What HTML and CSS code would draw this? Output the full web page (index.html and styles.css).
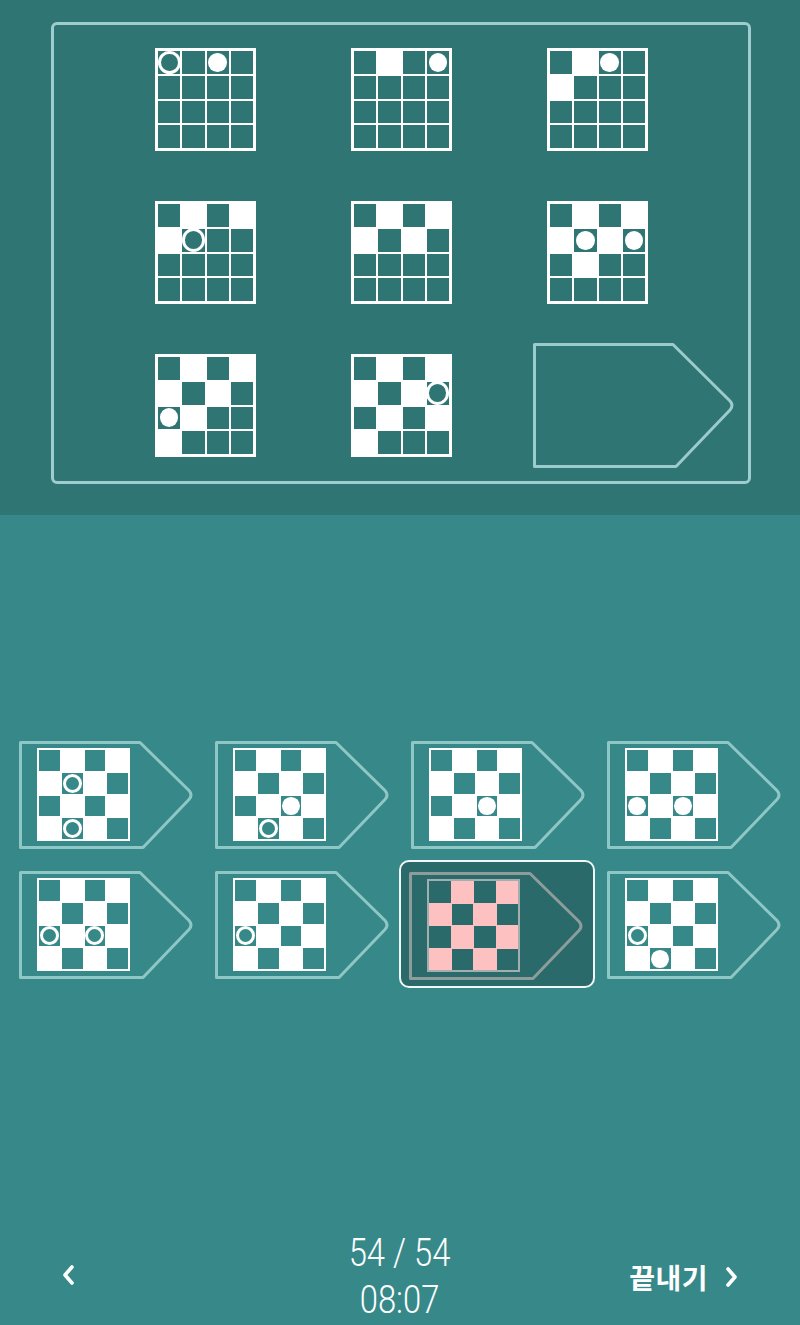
FILE: index.html
```html
<!DOCTYPE html>
<html lang="ko">
<head>
<meta charset="utf-8">
<title>Puzzle</title>
<link rel="stylesheet" href="styles.css">
</head>
<body>
<div class="top">
  <div class="panel">
    <div class="board">
      <div class="grid g-top">
        <i class="d r"></i><i class="d"></i><i class="d c"></i><i class="d"></i>
        <i class="d"></i><i class="d"></i><i class="d"></i><i class="d"></i>
        <i class="d"></i><i class="d"></i><i class="d"></i><i class="d"></i>
        <i class="d"></i><i class="d"></i><i class="d"></i><i class="d"></i>
      </div>
      <div class="grid g-top">
        <i class="d"></i><i class="w"></i><i class="d"></i><i class="d c"></i>
        <i class="d"></i><i class="d"></i><i class="d"></i><i class="d"></i>
        <i class="d"></i><i class="d"></i><i class="d"></i><i class="d"></i>
        <i class="d"></i><i class="d"></i><i class="d"></i><i class="d"></i>
      </div>
      <div class="grid g-top">
        <i class="d"></i><i class="w"></i><i class="d c"></i><i class="d"></i>
        <i class="w"></i><i class="d"></i><i class="d"></i><i class="d"></i>
        <i class="d"></i><i class="d"></i><i class="d"></i><i class="d"></i>
        <i class="d"></i><i class="d"></i><i class="d"></i><i class="d"></i>
      </div>
      <div class="grid g-top">
        <i class="d"></i><i class="w"></i><i class="d"></i><i class="w"></i>
        <i class="w"></i><i class="d r"></i><i class="d"></i><i class="d"></i>
        <i class="d"></i><i class="d"></i><i class="d"></i><i class="d"></i>
        <i class="d"></i><i class="d"></i><i class="d"></i><i class="d"></i>
      </div>
      <div class="grid g-top">
        <i class="d"></i><i class="w"></i><i class="d"></i><i class="w"></i>
        <i class="w"></i><i class="d"></i><i class="w"></i><i class="d"></i>
        <i class="d"></i><i class="d"></i><i class="d"></i><i class="d"></i>
        <i class="d"></i><i class="d"></i><i class="d"></i><i class="d"></i>
      </div>
      <div class="grid g-top">
        <i class="d"></i><i class="w"></i><i class="d"></i><i class="w"></i>
        <i class="w"></i><i class="d c"></i><i class="w"></i><i class="d c"></i>
        <i class="d"></i><i class="w"></i><i class="d"></i><i class="d"></i>
        <i class="d"></i><i class="d"></i><i class="d"></i><i class="d"></i>
      </div>
      <div class="grid g-top">
        <i class="d"></i><i class="w"></i><i class="d"></i><i class="w"></i>
        <i class="w"></i><i class="d"></i><i class="w"></i><i class="d"></i>
        <i class="d c"></i><i class="w"></i><i class="d"></i><i class="d"></i>
        <i class="w"></i><i class="d"></i><i class="d"></i><i class="d"></i>
      </div>
      <div class="grid g-top">
        <i class="d"></i><i class="w"></i><i class="d"></i><i class="w"></i>
        <i class="w"></i><i class="d"></i><i class="w"></i><i class="d r"></i>
        <i class="d"></i><i class="w"></i><i class="d"></i><i class="w"></i>
        <i class="w"></i><i class="d"></i><i class="d"></i><i class="d"></i>
      </div>
      <div class="blank">
        <svg class="shape" viewBox="0 0 204 125" width="204" height="125">
          <path d="M1.5 1.5 H140 L197 58 Q201 62.5 197 67 L143 123.5 H1.5 Z" fill="none" stroke="#9ccbcb" stroke-width="3" stroke-linejoin="round"/>
        </svg>
      </div>
    </div>
  </div>
</div>

<div class="bottom">
  <div class="options">
    <div class="opt">
      <svg class="oshape" viewBox="0 0 176 108" width="176" height="108"><path d="M1.5 1.5 H121 L170 49.5 Q174 54 170 58.5 L124 106.5 H1.5 Z" fill="none" stroke="#8fc6c6" stroke-width="3" stroke-linejoin="round"/></svg>
      <div class="grid g-opt">
        <i class="d"></i><i class="w"></i><i class="d"></i><i class="w"></i>
        <i class="w"></i><i class="d r"></i><i class="w"></i><i class="d"></i>
        <i class="d"></i><i class="w"></i><i class="d"></i><i class="w"></i>
        <i class="w"></i><i class="d r"></i><i class="w"></i><i class="d"></i>
      </div>
    </div>
    <div class="opt">
      <svg class="oshape" viewBox="0 0 176 108" width="176" height="108"><path d="M1.5 1.5 H121 L170 49.5 Q174 54 170 58.5 L124 106.5 H1.5 Z" fill="none" stroke="#8fc6c6" stroke-width="3" stroke-linejoin="round"/></svg>
      <div class="grid g-opt">
        <i class="d"></i><i class="w"></i><i class="d"></i><i class="w"></i>
        <i class="w"></i><i class="d"></i><i class="w"></i><i class="d"></i>
        <i class="d"></i><i class="w"></i><i class="d c"></i><i class="w"></i>
        <i class="w"></i><i class="d r"></i><i class="w"></i><i class="d"></i>
      </div>
    </div>
    <div class="opt">
      <svg class="oshape" viewBox="0 0 176 108" width="176" height="108"><path d="M1.5 1.5 H121 L170 49.5 Q174 54 170 58.5 L124 106.5 H1.5 Z" fill="none" stroke="#8fc6c6" stroke-width="3" stroke-linejoin="round"/></svg>
      <div class="grid g-opt">
        <i class="d"></i><i class="w"></i><i class="d"></i><i class="w"></i>
        <i class="w"></i><i class="d"></i><i class="w"></i><i class="d"></i>
        <i class="d"></i><i class="w"></i><i class="d c"></i><i class="w"></i>
        <i class="w"></i><i class="d"></i><i class="w"></i><i class="d"></i>
      </div>
    </div>
    <div class="opt">
      <svg class="oshape" viewBox="0 0 176 108" width="176" height="108"><path d="M1.5 1.5 H121 L170 49.5 Q174 54 170 58.5 L124 106.5 H1.5 Z" fill="none" stroke="#8fc6c6" stroke-width="3" stroke-linejoin="round"/></svg>
      <div class="grid g-opt">
        <i class="d"></i><i class="w"></i><i class="d"></i><i class="w"></i>
        <i class="w"></i><i class="d"></i><i class="w"></i><i class="d"></i>
        <i class="d c"></i><i class="w"></i><i class="d c"></i><i class="w"></i>
        <i class="w"></i><i class="d"></i><i class="w"></i><i class="d"></i>
      </div>
    </div>
    <div class="opt">
      <svg class="oshape" viewBox="0 0 176 108" width="176" height="108"><path d="M1.5 1.5 H121 L170 49.5 Q174 54 170 58.5 L124 106.5 H1.5 Z" fill="none" stroke="#8fc6c6" stroke-width="3" stroke-linejoin="round"/></svg>
      <div class="grid g-opt">
        <i class="d"></i><i class="w"></i><i class="d"></i><i class="w"></i>
        <i class="w"></i><i class="d"></i><i class="w"></i><i class="d"></i>
        <i class="d r"></i><i class="w"></i><i class="d r"></i><i class="w"></i>
        <i class="w"></i><i class="d"></i><i class="w"></i><i class="d"></i>
      </div>
    </div>
    <div class="opt">
      <svg class="oshape" viewBox="0 0 176 108" width="176" height="108"><path d="M1.5 1.5 H121 L170 49.5 Q174 54 170 58.5 L124 106.5 H1.5 Z" fill="none" stroke="#8fc6c6" stroke-width="3" stroke-linejoin="round"/></svg>
      <div class="grid g-opt">
        <i class="d"></i><i class="w"></i><i class="d"></i><i class="w"></i>
        <i class="w"></i><i class="d"></i><i class="w"></i><i class="d"></i>
        <i class="d r"></i><i class="w"></i><i class="d"></i><i class="w"></i>
        <i class="w"></i><i class="d"></i><i class="w"></i><i class="d"></i>
      </div>
    </div>
    <div class="opt selected">
      <svg class="oshape" viewBox="0 0 176 108" width="176" height="108"><path d="M1.5 1.5 H121 L170 49.5 Q174 54 170 58.5 L124 106.5 H1.5 Z" fill="none" stroke="#8e9c9c" stroke-width="3" stroke-linejoin="round"/></svg>
      <div class="grid g-opt pink">
        <i class="d"></i><i class="w"></i><i class="d"></i><i class="w"></i>
        <i class="w"></i><i class="d"></i><i class="w"></i><i class="d"></i>
        <i class="d"></i><i class="w"></i><i class="d"></i><i class="w"></i>
        <i class="w"></i><i class="d"></i><i class="w"></i><i class="d"></i>
      </div>
    </div>
    <div class="opt">
      <svg class="oshape" viewBox="0 0 176 108" width="176" height="108"><path d="M1.5 1.5 H121 L170 49.5 Q174 54 170 58.5 L124 106.5 H1.5 Z" fill="none" stroke="#8fc6c6" stroke-width="3" stroke-linejoin="round"/></svg>
      <div class="grid g-opt">
        <i class="d"></i><i class="w"></i><i class="d"></i><i class="w"></i>
        <i class="w"></i><i class="d"></i><i class="w"></i><i class="d"></i>
        <i class="d r"></i><i class="w"></i><i class="d"></i><i class="w"></i>
        <i class="w"></i><i class="d c"></i><i class="w"></i><i class="d"></i>
      </div>
    </div>
  </div>

  <div class="nav">
    <div class="prev">
      <svg width="16" height="24" viewBox="0 0 16 24"><polyline points="12,4 5,12 12,20" fill="none" stroke="#fff" stroke-width="3.6" stroke-linecap="round" stroke-linejoin="round"/></svg>
    </div>
    <div class="status">
      <div class="count">54 / 54</div>
      <div class="time">08:07</div>
    </div>
    <div class="finish">
      <span class="finish-label">끝내기</span>
      <svg width="16" height="24" viewBox="0 0 16 24"><polyline points="4,4 11,12 4,20" fill="none" stroke="#fff" stroke-width="3.6" stroke-linecap="round" stroke-linejoin="round"/></svg>
    </div>
  </div>
</div>
</body>
</html>
```

FILE: styles.css
```css
html, body {
  margin: 0;
  padding: 0;
}
body {
  width: 800px;
  height: 1325px;
  background: #378989;
  font-family: Roboto, "Noto Sans CJK KR", sans-serif;
  color: #fff;
  display: flex;
  flex-direction: column;
  overflow: hidden;
}
.top {
  height: 515px;
  background: #2e7574;
  padding-top: 22px;
  box-sizing: border-box;
  flex: none;
}
.panel {
  margin-left: 51px;
  width: 700px;
  height: 462px;
  box-sizing: border-box;
  border: 3px solid #9fcccc;
  border-radius: 6px;
  padding: 23px 0 0 101px;
}
.board {
  display: grid;
  grid-template-columns: repeat(3, 101px);
  grid-template-rows: 103px 103px 103px;
  column-gap: 95px;
  row-gap: 50px;
}
.grid {
  display: grid;
  grid-template-columns: repeat(4, 1fr);
  grid-template-rows: repeat(4, 1fr);
  background: #fff;
  box-sizing: border-box;
}
.grid i {
  display: flex;
  align-items: center;
  justify-content: center;
}
.g-top {
  width: 101px;
  height: 103px;
  padding: 3px;
  gap: 2px;
}
.g-top .d { background: #2e7574; }
.g-top .w { background: #fff; }
.grid .c::after {
  content: "";
  display: block;
  width: 84%;
  height: 84%;
  border-radius: 50%;
  background: #fff;
}
.grid .r::after {
  content: "";
  display: block;
  width: 100%;
  height: 100%;
  box-sizing: border-box;
  border-radius: 50%;
  border: 3px solid #fff;
}
.g-top .r::after {
  width: 104%;
  height: 104%;
  flex: none;
}
.blank {
  align-self: center;
  margin-left: -14px;
  width: 204px;
  height: 125px;
}
.shape, .oshape {
  display: block;
}
.bottom {
  flex: 1;
  display: flex;
  flex-direction: column;
}
.options {
  margin: 215px 0 0 8px;
  display: grid;
  grid-template-columns: repeat(4, 196px);
  grid-auto-rows: 128px;
  row-gap: 2px;
}
.opt {
  position: relative;
  box-sizing: border-box;
  padding: 18px 0 0 29px;
}
.oshape {
  position: absolute;
  left: 11px;
  top: 11px;
}
.g-opt {
  position: relative;
  width: 93px;
  height: 93px;
  padding: 2px;
  gap: 2px;
}
.g-opt .d { background: #378989; }
.g-opt .w { background: #fff; }
.g-opt .c::after {
  width: 86%;
  height: 86%;
}
.g-opt .r::after {
  width: 92%;
  height: 92%;
}
.selected {
  background: #2a6a6a;
  border: 2px solid #f2f7f7;
  border-radius: 10px;
  margin-left: -1px;
  margin-right: 1px;
  padding: 17px 0 0 26px;
}
.selected .oshape {
  left: 8px;
  top: 10px;
}
.g-opt.pink {
  background: #fdc1c1;
  border: 2px solid #a3aeae;
  padding: 0;
  gap: 1px;
}
.g-opt.pink .d { background: #2a6a6a; }
.g-opt.pink .w { background: #fdc1c1; }

.nav {
  margin-top: auto;
  height: 100px;
  margin-bottom: 0;
  display: flex;
  align-items: center;
  justify-content: space-between;
  padding: 0 60px 0 60px;
}
.prev, .finish {
  display: flex;
  align-items: center;
  width: 150px;
}
.finish {
  justify-content: flex-end;
  gap: 16px;
  margin-top: 4px;
}
.finish-label {
  font-family: "Noto Sans CJK KR", sans-serif;
  font-weight: 700;
  font-size: 28px;
  letter-spacing: 0.5px;
}
.status {
  text-align: center;
  font-weight: 300;
  font-size: 39px;
  line-height: 47px;
  transform: scaleX(0.84);
  margin-top: 4px;
}
```
